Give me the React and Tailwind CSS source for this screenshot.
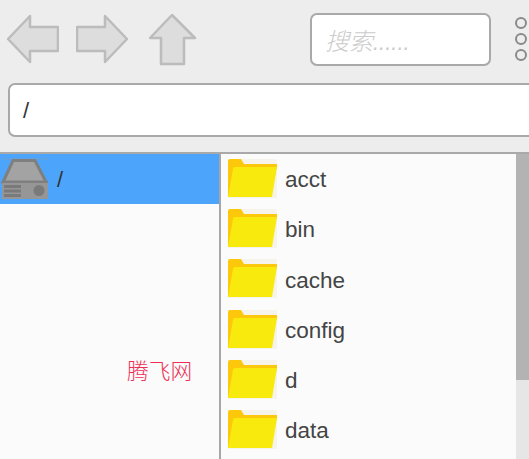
import React from 'react';

const FONT = "font-['Liberation_Sans','Noto_Sans_CJK_SC',sans-serif]";
const folders = ['acct', 'bin', 'cache', 'config', 'd', 'data'];

const ArrowIcon = ({ points, size = 52, className }) => (
  <svg width={size} height="52" viewBox={`0 0 ${size} 52`} className={className}>
    <polygon points={points} fill="#dddddd" stroke="#bcbcbc" strokeWidth="2.5" strokeLinejoin="round" />
  </svg>
);

const DriveIcon = () => (
  <svg width="48" height="42" viewBox="0 0 48 42" className="shrink-0">
    <rect x="2" y="0.5" width="46" height="1" fill="#6f9fd0" />
    <polygon points="3,24 13,2.5 35,2.5 46,24" fill="#a3a3a3" stroke="#7f7f7f" strokeWidth="3" />
    <rect x="2" y="24" width="46" height="17" fill="#969696" />
    <rect x="2" y="23" width="46" height="2" fill="#7f7f7f" />
    <rect x="4" y="27" width="17" height="3" fill="#7a7a7a" />
    <rect x="4" y="31.5" width="17" height="3" fill="#7a7a7a" />
    <rect x="4" y="36" width="17" height="3" fill="#7a7a7a" />
    <circle cx="39" cy="32.5" r="5.5" fill="#7a7a7a" />
  </svg>
);

const FolderIcon = () => (
  <svg width="52" height="42" viewBox="0 0 52 42" className="shrink-0 mt-[-2px]">
    <rect x="1" y="2" width="49" height="39" rx="1" fill="#f6f3ea" />
    <path d="M1 4 Q1 2 3 2 H14 L17 7 H50 V12 H1 Z" fill="#fdc80c" />
    <path d="M1 10 H6 V40 H1 Z" fill="#fdc80c" />
    <path d="M6 12 Q6 10 8 10 H50 L45 40 H1 Z" fill="#f8ea0c" />
  </svg>
);

const App = () => {
  return (
    <div className={`relative w-[529px] h-[459px] overflow-hidden bg-[#ededed] ${FONT}`}>
      {/* 工具栏 */}
      <div className="h-[83px] flex items-start">
        <div className="flex pl-[7px] pt-[14px]">
          <ArrowIcon points="1,25 23,2 23,13 51,13 51,37 23,37 23,48" />
          <ArrowIcon className="ml-[17px]" points="51,25 29,2 29,13 1,13 1,37 29,37 29,48" />
          <ArrowIcon className="ml-[21px]" size={48} points="23,1 46,24 35,24 35,50 12,50 12,24 1,24" />
        </div>
        <div className="ml-[113px] mt-[13px] w-[181px] h-[53px] bg-white border-2 border-[#a9a9a9] rounded-[7px] flex items-center pl-[13px] pt-[5px] italic text-[22px] text-[#cbcbcb] font-light">
          <span className="text-[24px]">搜索</span>......
        </div>
        <div className="ml-[24px] mt-[17px] flex flex-col gap-[4px]">
          <div className="w-[12px] h-[12px] rounded-full border-2 border-[#8a8a8a] bg-[#ededed]" />
          <div className="w-[12px] h-[12px] rounded-full border-2 border-[#8a8a8a] bg-[#ededed]" />
          <div className="w-[12px] h-[12px] rounded-full border-2 border-[#8a8a8a] bg-[#ededed]" />
        </div>
      </div>

      {/* 地址栏 */}
      <div className="pl-[8px] h-[69px]">
        <div className="w-[540px] h-[54px] bg-white border-2 border-[#a9a9a9] rounded-[7px] flex items-center pl-[13px] text-[22px] text-[#333333]">
          /
        </div>
      </div>

      <div className="flex h-[307px] border-t-2 border-[#a9a9a9] bg-[#fbfbfb]">
        {/* 左侧目录 */}
        <div className="w-[219px] shrink-0">
          <div className="h-[50px] bg-[#4ca5fb] flex items-center text-[22px] text-[#333333]">
            <DriveIcon />
            <span className="ml-[9px]">/</span>
          </div>
        </div>
        <div className="w-[2px] shrink-0 bg-[#a6a6a6]" />

        {/* 文件列表 */}
        <div className="flex-1 pl-[6px]">
          {folders.map((name) => (
            <div key={name} className="h-[50.2px] flex items-center text-[22.5px] text-[#444444]">
              <FolderIcon />
              <span className="ml-[6px] mt-[2px]">{name}</span>
            </div>
          ))}
        </div>

        {/* 滚动条 */}
        <div className="w-[13px] shrink-0 bg-[#e6e6e6]">
          <div className="h-[226px] bg-[#b3b3b3]" />
        </div>
      </div>

      {/* 水印 */}
      <div className="absolute left-[127px] top-[359px] text-[21.7px] leading-[26px] font-light text-[#ee2f55]">腾飞网</div>
    </div>
  );
};

export default App;
